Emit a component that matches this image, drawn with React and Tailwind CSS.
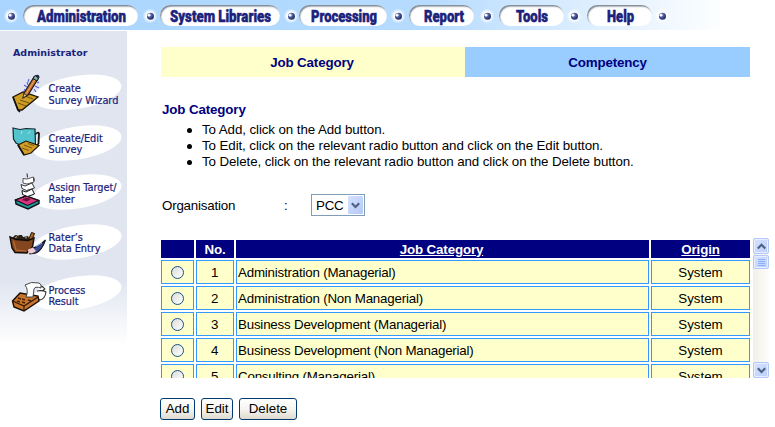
import React from "react";

const NAV = [
  { label: "Administration", box: "w-[115px] ml-[4px]", w: 115, x: 14, len: 89 },
  { label: "System Libraries", box: "w-[120px] ml-[2px]", w: 120, x: 10, len: 101 },
  { label: "Processing", box: "w-[88px] ml-0", w: 88, x: 12, len: 66 },
  { label: "Report", box: "w-[65px] ml-[3px]", w: 65, x: 15, len: 40 },
  { label: "Tools", box: "w-[65px] ml-[4px]", w: 65, x: 17, len: 32 },
  { label: "Help", box: "w-[65px] ml-[5px]", w: 65, x: 20, len: 27 },
];
const DOTS = ["ml-[3px]", "ml-[4px]", "ml-[3px]", "ml-[3px]", "ml-[5px]", "ml-[2px]", "ml-[2px]"];

function Dot({ cls }) {
  return (
    <svg className={`h-[18px] w-4 shrink-0 ${cls}`} viewBox="0 0 16 18">
      <defs>
        <radialGradient id="halo">
          <stop offset="0.5" stopColor="#fff" />
          <stop offset="1" stopColor="#fff" stopOpacity="0" />
        </radialGradient>
        <radialGradient id="bead" cx="0.35" cy="0.3" r="0.75">
          <stop offset="0" stopColor="#b9c2e4" />
          <stop offset="0.45" stopColor="#4a5799" />
          <stop offset="1" stopColor="#1c2763" />
        </radialGradient>
      </defs>
      <circle cx="8" cy="9" r="7.5" fill="url(#halo)" />
      <circle cx="8.5" cy="9.3" r="3.5" fill="url(#bead)" />
      <circle cx="7" cy="8.2" r="1.3" fill="#fff" />
    </svg>
  );
}

function Nav() {
  return (
    <header className="flex h-[30px] w-[775px] items-center bg-linear-to-r from-[#a9d5fe] from-0% via-[#b6dbfe] via-55% to-white to-94% pt-px">
      {NAV.map((n, i) => (
        <React.Fragment key={n.label}>
          <Dot cls={DOTS[i]} />
          <a
            className={`block h-[21px] shrink-0 rounded-full bg-white shadow-[inset_1px_1.5px_1.5px_#76828e] ${n.box}`}
          >
            <svg width={n.w} height="21" className="block overflow-visible">
              <text
                x={n.x}
                y="17"
                textLength={n.len}
                lengthAdjust="spacingAndGlyphs"
                className="fill-[#1b237c] stroke-[#1b237c] stroke-[0.5] font-[Roboto,Arial,sans-serif] text-[16px] font-black"
              >
                {n.label}
              </text>
            </svg>
          </a>
        </React.Fragment>
      ))}
      <Dot cls={DOTS[6]} />
    </header>
  );
}

/* Sidebar drawings: each uses a 127x50 box, one per menu row. */
const ART = [
  <g key="a">
    <path d="M13 27 L23 22 L38 27 L22 40 L18 40Z" fill="#cf9d20" stroke="#1a1408" strokeWidth="1.3" />
    <path d="M13 27 L18 40 L20 42" stroke="#111" strokeWidth="1.6" fill="none" />
    <path d="M20 30 l9 3 M18 33 l8 3 M25 26 l8 3" stroke="#5e4712" strokeWidth="0.9" />
    <path d="M23 28 L24 23 L34 7 L38 9 L28 25Z" fill="#c66d28" stroke="#1c1510" strokeWidth="1.1" />
    <path d="M26 24 L35.5 8.5" stroke="#ecb06a" strokeWidth="1" />
    <path d="M23 28 L24 24 L27 25Z" fill="#f3d6a0" stroke="#222" strokeWidth=".6" />
    <path d="M33 8.5 L35 5.5 L39 7 L37 11Z" fill="#7bb5a9" stroke="#111" strokeWidth="1" />
    <path d="M35 5.5 q4 -2 4.5 1.5 l-1 2Z" fill="#2a2342" />
    <path d="M27 12 l1 3 M29 9 l-1 3 M24 15 l3 2 M25 19 l-1 2 M35 16 l4 2 M34 19 l2 3 M37 13 l2 -1" stroke="#5560e8" strokeWidth="1.1" />
  </g>,
  <g key="b">
    <path d="M35 14.5 q3 -3 4 -1 l-.5 10 -4 5" fill="none" stroke="#171717" strokeWidth="1.8" />
    <path d="M13 8 L20 9.5 L26 8.5 L35 9 L35.5 25 L20 25 L16 23 L13.5 19Z" fill="#53c4cd" stroke="#142a2e" strokeWidth="1.2" />
    <path d="M22 11 l-1 3 M30 11 l-2 3" stroke="#a5e4e8" strokeWidth="1" />
    <path d="M18 25 L26 21 L39 25.5 L31 33 L24 35Z" fill="#d39c25" stroke="#201607" strokeWidth="1.1" />
    <path d="M18 25 L24 35" stroke="#111" strokeWidth="1.7" />
    <path d="M24 25 l8 3 M22 28 l7 2.5 M28 23.5 l6 2" stroke="#5e4712" strokeWidth="0.8" />
  </g>,
  <g key="c">
    <path d="M16 34 L15.5 30 L26 26 L39 30.5 L39 33.5 L28 39Z" fill="#1d9da1" stroke="#111" strokeWidth="1.4" />
    <path d="M15.5 30 L26 26 L38.500 30.5 L27.5 35.5Z" fill="#db3482" stroke="#111" strokeWidth="1.1" />
    <path d="M22 30 l4 -2.5 5 1.5 -4 2.5Z" fill="#641436" />
    <path d="M23 28 q2 -4 6 -4" stroke="#111" strokeWidth="1.2" fill="none" />
    <path d="M22 20.5 l4 1.5 6 -3 2.5 5 -7 2.5 -5 -2Z" fill="#fff" stroke="#111" strokeWidth="1" />
    <path d="M21 14.5 l4 1.5 7 -3 2.5 5 -8 2.5 -4.5 -2Z" fill="#fff" stroke="#222" strokeWidth=".9" />
    <path d="M23 8.5 l4 .5 6.5 -2 .5 5 -7 2 -4 -1Z" fill="#fff" stroke="#444" strokeWidth=".9" />
    <path d="M27 3.5 l.5 4 M34 8 v3" stroke="#222" strokeWidth="1" />
  </g>,
  <g key="d">
    <path d="M12 19 q3 -6 6 -3 l1 -1 3 0 1 2 5 -1 2 4 -10 2Z" fill="#29231c" />
    <path d="M28.5 20 L31.5 12.5 L34.5 13.5 L31.5 21Z" fill="#ad641f" stroke="#1b130b" strokeWidth="1" />
    <path d="M15 18 l2 -1.5 M25 17.5 l2 .5" stroke="#b89565" strokeWidth="1.2" />
    <path d="M28 29 Q38 28 45.5 20 Q42 30 36 33 L30 34Z" fill="#3a4d9a" stroke="#101319" strokeWidth="1.1" />
    <path d="M36 26.5 l6 -3.500" stroke="#8ba4e4" strokeWidth="1.3" />
    <path d="M10 17 L16 19.5 L28 20.5 L34 18 L32.5 27 L27 33 L15 32.5 L12 28Z" fill="#84461e" stroke="#130d08" strokeWidth="1.4" />
    <path d="M13.5 21 L16 30 L26 31" stroke="#b56e37" strokeWidth="1.2" fill="none" />
    <path d="M28 29.5 l5 -2 3 3.5 -4 2.5 -3.500 -.5Z" fill="#f2c9cd" />
  </g>,
  <g key="e">
    <path d="M36 17 q5 -3 9 2 l-3 2 M37 21 q6 -1 9 1 q-1 7 -6 8 l-4 -2" fill="#fff" stroke="#333" strokeWidth="1.1" />
    <path d="M12.5 31 L20 23 L38 26 L39 31 L24 41 L14 37Z" fill="#c8732a" stroke="#160d06" strokeWidth="1.4" />
    <path d="M12.5 31 L24 36 L38 27 M24 36 L24 41" stroke="#32190a" strokeWidth="1.2" fill="none" />
    <path d="M18 28 l3 1 M17 31 l3 1 M22 29 l3 1 M22 32 l3 1 M28 30 l3 1" stroke="#4b220b" strokeWidth="1.5" />
    <path d="M25 15 Q31 11 39 13 Q42 14 41 18 Q35 16 34 19 L33 27 L26 27 Q29 20 25 15Z" fill="#fff" stroke="#333" strokeWidth=".9" />
  </g>,
];

const MENU = [
  { a: "Create", b: "Survey Wizard", cy: 22.3, cls: "pt-[13px] leading-[12px]" },
  { a: "Create/Edit", b: "Survey", cy: 23, cls: "pt-[13px] leading-[11px]" },
  { a: "Assign Target/", b: "Rater", cy: 22, cls: "pt-[12px] leading-[12px]" },
  { a: "Rater’s", b: "Data Entry", cy: 22, cls: "pt-[12px] leading-[11px]" },
  { a: "Process", b: "Result", cy: 23, cls: "pt-[15px] leading-[11px]" },
];

function Sidebar() {
  return (
    <aside className="mt-px h-[320px] w-[127px] shrink-0 bg-linear-to-b from-[#e0e5f0] from-78% to-white to-98% font-['DejaVu_Sans',Verdana,sans-serif] text-[#1b237c]">
      <h2 className="h-[39px] pt-[15px] pl-[13px] text-[9.5px] leading-[13px] font-bold">Administrator</h2>
      {MENU.map((m, i) => (
        <div
          key={m.a}
          className={`relative h-[50px] pl-[48.5px] text-[9.8px] tracking-[-0.06px] whitespace-nowrap ${m.cls}`}
        >
          <svg width="127" height="50" className="absolute top-0 left-0">
            <ellipse cx="77" cy={m.cy} rx="45" ry="16.5" fill="#fff" transform={`rotate(-9 77 ${m.cy})`} />
            {ART[i]}
          </svg>
          <div className="relative [-webkit-text-stroke:0.2px_#1b237c]">
            {m.a}
            <br />
            {m.b}
          </div>
        </div>
      ))}
    </aside>
  );
}

const ROWS = [
  "Administration (Managerial)",
  "Administration (Non Managerial)",
  "Business Development (Managerial)",
  "Business Development (Non Managerial)",
  "Consulting (Managerial)",
];
const COLS = "grid grid-cols-[33px_38px_413px_99px] gap-x-[2px]";
const CELL = "flex items-center border border-[#3399ff] bg-[#ffffcc] pt-px";

function Chevron({ up }) {
  return (
    <svg width="9" height="7" viewBox="0 0 9 7" fill="none" stroke="#4d6185" strokeWidth="2.2">
      <path d={up ? "M0.8 5.5 L4.5 1.8 L8.2 5.5" : "M0.8 1.3 L4.5 5 L8.2 1.3"} />
    </svg>
  );
}

function ScrollBar() {
  const btn =
    "flex w-4 shrink-0 items-center justify-center rounded-[2px] border border-[#b4c8f6] bg-linear-to-br from-[#d5e1fe] to-[#bccffb] shadow-[inset_0_0_0_1px_#e6eeff]";
  return (
    <div className="ml-[3px] flex h-[140px] w-4 flex-col bg-linear-to-r from-[#f1efe9] to-[#fdfdfa]">
      <div className={`h-[16px] ${btn}`}>
        <Chevron up />
      </div>
      <div className={`mt-px h-[14px] ${btn}`}>
        <div className="flex flex-col gap-px">
          <i className="h-px w-[7px] bg-[#8cb0f8]" />
          <i className="h-px w-[7px] bg-[#8cb0f8]" />
          <i className="h-px w-[7px] bg-[#8cb0f8]" />
          <i className="h-px w-[7px] bg-[#8cb0f8]" />
        </div>
      </div>
      <div className={`mt-auto h-[16px] ${btn}`}>
        <Chevron />
      </div>
    </div>
  );
}

function Button({ children, cls }) {
  return (
    <button
      className={`flex h-[22px] items-center justify-center rounded-[3px] border border-[#003c74] bg-linear-to-b from-white via-[#f6f5f0] to-[#dedace] pb-px text-[13.333px] leading-none ${cls}`}
    >
      {children}
    </button>
  );
}

export default function App() {
  const head = "flex items-center justify-center bg-[#000080] pt-px font-bold text-white";
  return (
    <div className="h-[427px] w-[775px] overflow-hidden bg-white font-['Liberation_Sans',Arial,sans-serif] text-[13.333px] leading-4 text-black">
      <Nav />
      <div className="flex">
        <Sidebar />
        <main className="ml-[34px] w-[614px] shrink-0 pt-[17px]">
          <div className="flex h-[30px] w-[589px] font-bold tracking-[-0.15px] text-[#000080]">
            <div className="flex w-[304px] items-center justify-center bg-[#ffffcc] pt-px pr-[2px]">Job Category</div>
            <div className="flex w-[285px] items-center justify-center bg-[#99ccff] pt-px">Competency</div>
          </div>
          <h1 className="mt-[25px] pl-px font-bold tracking-[-0.12px] text-[#000080]">Job Category</h1>
          <ul className="mt-[4px] pl-[41px] tracking-[-0.09px]">
            {[
              "To Add, click on the Add button.",
              "To Edit, click on the relevant radio button and click on the Edit button.",
              "To Delete, click on the relevant radio button and click on the Delete button.",
            ].map((t) => (
              <li key={t} className="relative h-4 leading-4">
                <span className="absolute top-[6px] -left-[15px] h-[5px] w-[5px] rounded-full bg-black" />
                {t}
              </li>
            ))}
          </ul>
          <div className="mt-[24px] flex h-[22px] items-center pl-px tracking-[-0.2px]">
            <span className="w-[122px] pt-px">Organisation</span>
            <span className="w-[27px] pt-px">:</span>
            <div className="flex h-[22px] w-[54px] items-center border border-[#7f9db9] pl-[4px]">
              <span className="w-[32px] pt-px">PCC</span>
              <span className="flex h-[18px] w-[15px] items-center justify-center rounded-[1px] bg-linear-to-br from-[#d5e1fe] to-[#b4c8f6]">
                <Chevron />
              </span>
            </div>
          </div>
          <div className="mt-[22px] flex h-[140px] overflow-hidden tracking-[-0.2px]">
            <div className="flex w-[589px] flex-col gap-[2px] pt-[2px]">
              <div className={`h-[18px] shrink-0 tracking-[-0.15px] ${COLS}`}>
                <div className={head} />
                <div className={head}>No.</div>
                <div className={`${head} pr-[2px] underline`}>Job Category</div>
                <div className={`${head} underline`}>Origin</div>
              </div>
              {ROWS.map((r, i) => (
                <div key={r} className={`h-[24px] shrink-0 ${COLS}`}>
                  <div className={`${CELL} justify-center`}>
                    <span className="h-[13px] w-[13px] rounded-full border border-[#1c5180] bg-linear-to-br from-[#dcdcd7] to-white" />
                  </div>
                  <div className={`${CELL} justify-center pr-px`}>{i + 1}</div>
                  <div className={`${CELL} pl-px`}>{r}</div>
                  <div className={`${CELL} justify-center tracking-[0px]`}>System</div>
                </div>
              ))}
            </div>
            <ScrollBar />
          </div>
          <div className="mt-[20px] -ml-px flex">
            <Button cls="w-[35px]">Add</Button>
            <Button cls="ml-[6px] w-[32px]">Edit</Button>
            <Button cls="ml-[6px] w-[58px]">Delete</Button>
          </div>
        </main>
      </div>
    </div>
  );
}
